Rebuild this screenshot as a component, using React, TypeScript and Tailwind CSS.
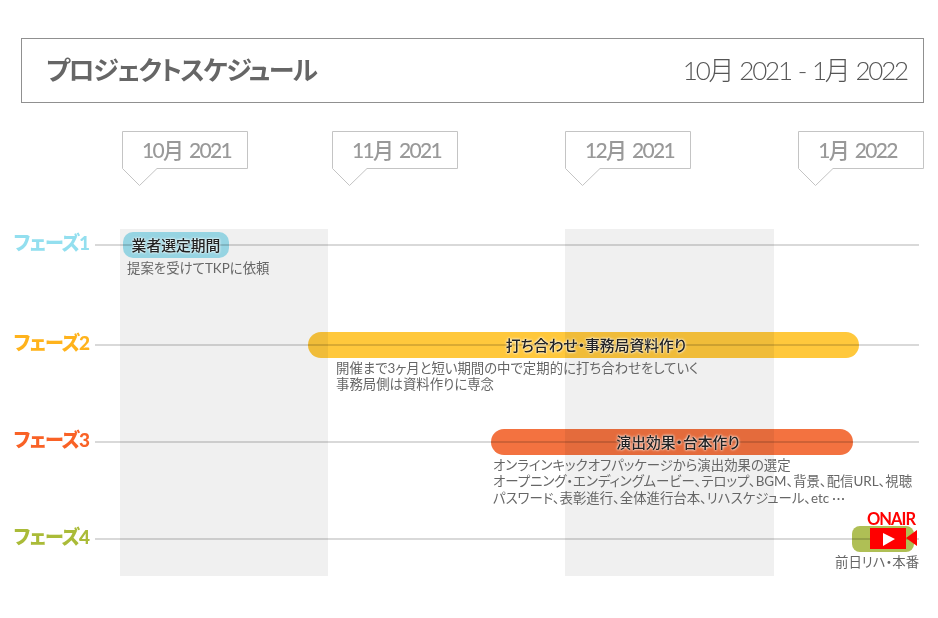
import type { ReactNode } from 'react';

const months = [
    { label: '10月 2021', width: 'w-[210px]', text: 'pl-[3px]' },
    { label: '11月 2021', width: 'w-[233px]', text: 'pl-[3px]' },
    { label: '12月 2021', width: 'w-[233px]', text: 'pl-[3px]' },
    { label: '1月 2022', width: 'w-[126px]', text: 'pr-[7px]' },
];

function MonthCallout({ label, text }: { label: string; text: string }) {
    return (
        <div className="relative h-[56px] w-[126px]">
            <svg className="absolute inset-0" width="126" height="56" viewBox="0 0 126 56" fill="none">
                <path d="M0.5 0.5H125.5V37.5H35L17.5 54.5L0.5 37.5Z" fill="#fff" stroke="#c4c4c4" />
            </svg>
            <div className={`relative flex h-[37px] items-center justify-center text-[21px] font-medium tracking-[-1.7px] text-[#999] [word-spacing:3px] ${text}`}>
                {label}
            </div>
        </div>
    );
}

function OnAirCamera() {
    return (
        <svg width="48" height="24" viewBox="0 0 48 24" className="block">
            <rect x="0" y="2" width="36" height="21" fill="#ff0000" />
            <path d="M36 12L47 4V20Z" fill="#ff0000" />
            <path d="M13 7L25 13L13 20Z" fill="#fff" />
        </svg>
    );
}

type PhaseRowProps = {
    label: string;
    labelColor: string;
    barClass: string;
    title?: string;
    description: ReactNode;
    descriptionClass: string;
    children?: ReactNode;
};

function PhaseRow({ label, labelColor, barClass, title, description, descriptionClass, children }: PhaseRowProps) {
    return (
        <div className="relative flex items-start">
            <div className={`relative z-30 flex h-[26px] w-[89px] shrink-0 items-center justify-end pb-[3px] text-[19px] font-black tracking-[-1px] ${labelColor}`}>
                {label}
            </div>
            <div className="flex min-w-0 flex-1 flex-col">
                <div className={`flex h-[26px] items-center justify-center text-[14.8px] font-medium text-[#222] ${barClass}`}>
                    {title && <span className="relative z-30 [text-shadow:0_0_2px_#fff,0_0_3px_#fff]">{title}</span>}
                </div>
                <p className={`relative z-30 mt-[2px] whitespace-nowrap text-[13.4px] leading-[16.3px] text-[#666] ${descriptionClass}`}>
                    {description}
                </p>
            </div>
            {/* the phase line runs over the bar and the month band, under the text */}
            <div className="absolute left-[95px] top-[12px] z-20 h-[2px] w-[824px] bg-black/15" />
            {children}
        </div>
    );
}

export default function App() {
    return (
        <div className="h-[618px] w-[938px] overflow-hidden bg-white pt-[38px] font-['Lato','Noto_Sans_CJK_JP',sans-serif] [font-feature-settings:'palt']">
            <header className="ml-[21px] flex h-[65px] w-[903px] items-center justify-between border border-[#909090] pl-[24px] pr-[16px]">
                <h1 className="text-[26px] font-bold tracking-[-1.6px] text-[#666]">プロジェクトスケジュール</h1>
                <span className="text-[26px] font-light tracking-[-2.2px] text-[#555] [word-spacing:2px]">10月 2021 - 1月 2022</span>
            </header>

            <div className="ml-[122px] mt-[28px] flex h-[98px]">
                {months.map((month) => (
                    <div key={month.label} className={month.width}>
                        <MonthCallout label={month.label} text={month.text} />
                    </div>
                ))}
            </div>

            {/* Month bands sit over the bars so the bars darken where they cross */}
            <div className="relative grid h-[347px] w-[938px] grid-rows-[100px_97px_97px_53px] pt-[3px]">
                <div className="absolute bottom-0 left-[120px] top-0 z-10 w-[208px] bg-[#f0f0f0] mix-blend-multiply" />
                <div className="absolute bottom-0 left-[565px] top-0 z-10 w-[209px] bg-[#f0f0f0] mix-blend-multiply" />

                <PhaseRow
                    label="フェーズ1"
                    labelColor="text-[#93dfef]"
                    barClass="ml-[34px] w-[106px] rounded-[10px] bg-[#a0e2f1]"
                    title="業者選定期間"
                    description="提案を受けてTKPに依頼"
                    descriptionClass="ml-[38px]"
                />
                <PhaseRow
                    label="フェーズ2"
                    labelColor="text-[#ffb31c]"
                    barClass="ml-[219px] w-[551px] rounded-full bg-[#ffc83c] pl-[25px]"
                    title="打ち合わせ・事務局資料作り"
                    description={
                        <>
                            開催まで3ヶ月と短い期間の中で定期的に打ち合わせをしていく
                            <br />
                            事務局側は資料作りに専念
                        </>
                    }
                    descriptionClass="ml-[247px]"
                />
                <PhaseRow
                    label="フェーズ3"
                    labelColor="text-[#f96226]"
                    barClass="ml-[402px] w-[362px] rounded-full bg-[#f37240] pl-[12px]"
                    title="演出効果・台本作り"
                    description={
                        <>
                            オンラインキックオフパッケージから演出効果の選定
                            <br />
                            オープニング・エンディングムービー、テロップ、BGM、背景、配信URL、視聴
                            <br />
                            パスワード、表彰進行、全体進行台本、リハスケジュール、etc
                            <span className="ml-[3px] tracking-[1px]">···</span>
                        </>
                    }
                    descriptionClass="ml-[404px]"
                />
                <PhaseRow
                    label="フェーズ4"
                    labelColor="text-[#aabb38]"
                    barClass="ml-[763px] w-[62px] rounded-[8px] bg-[#afbf55]"
                    description="前日リハ・本番"
                    descriptionClass="ml-[746px]"
                >
                    {/* ONAIR badge lies over the end of the bar */}
                    <div className="absolute left-[867px] top-[-16px] z-30 flex flex-col">
                        <span className="text-[16.5px] font-bold leading-[18px] tracking-[-1px] text-[#ff0000]">ONAIR</span>
                        <div className="-mt-[2px] ml-[3px]">
                            <OnAirCamera />
                        </div>
                    </div>
                </PhaseRow>
            </div>
        </div>
    );
}
